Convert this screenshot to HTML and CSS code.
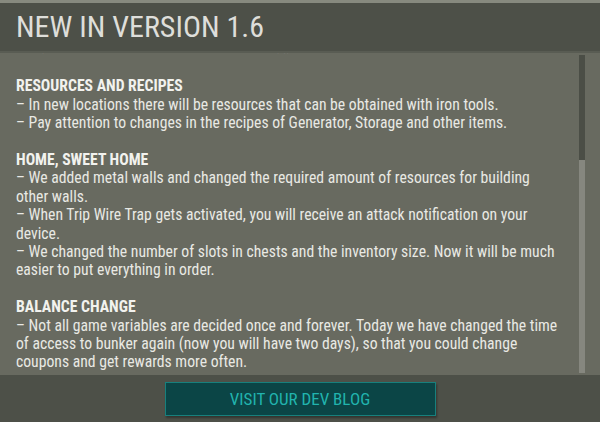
FILE: index.html
```html
<!DOCTYPE html>
<html lang="en">
<head>
<meta charset="utf-8">
<title>New in version 1.6</title>
<link rel="stylesheet" href="styles.css">
</head>
<body>
<div class="window">
  <div class="topstrip"></div>
  <header class="header">
    <h1 class="title">NEW IN VERSION 1.6</h1>
  </header>
  <main class="content">
    <div class="text">
      <div class="inner">
        <div class="section section-prev">
          <p>– Hi, the team worked hard on this release, ,, as usual.</p>
        </div>
        <div class="section">
          <div class="heading">RESOURCES AND RECIPES</div>
          <p>– In new locations there will be resources that can be obtained with iron tools.</p>
          <p>– Pay attention to changes in the recipes of Generator, Storage and other items.</p>
        </div>
        <div class="section">
          <div class="heading">HOME, SWEET HOME</div>
          <p>– We added metal walls and changed the required amount of resources for building other walls.</p>
          <p>– When Trip Wire Trap gets activated, you will receive an attack notification on your device.</p>
          <p>– We changed the number of slots in chests and the inventory size. Now it will be much easier to put everything in order.</p>
        </div>
        <div class="section">
          <div class="heading">BALANCE CHANGE</div>
          <p>– Not all game variables are decided once and forever. Today we have changed the time of access to bunker again (now you will have two days), so that you could change coupons and get rewards more often.</p>
        </div>
      </div>
    </div>
    <div class="scrollbar">
      <div class="thumb"></div>
      <div class="track"></div>
    </div>
  </main>
  <footer class="footer">
    <button class="blog-btn" type="button">VISIT OUR DEV BLOG</button>
  </footer>
</div>
</body>
</html>
```
FILE: styles.css
```css
html, body {
  margin: 0;
  padding: 0;
}
body {
  background: #686a60;
  font-family: "Roboto Condensed", "Roboto", "Liberation Sans", sans-serif;
  color: #e9e9e4;
}
.window {
  width: 600px;
  height: 422px;
  display: grid;
  grid-template-rows: 3px 50px 322px 47px;
  overflow: hidden;
}
.topstrip {
  background: #878a7f;
}
.header {
  box-sizing: border-box;
  background: #4d5048;
  border-bottom: 2px solid #595c53;
  overflow: hidden;
}
.title {
  margin: 0;
  padding-left: 16px;
  font-size: 30px;
  font-weight: 400;
  line-height: 48px;
  color: #dededa;
}
.content {
  display: flex;
  background: #686a60;
  overflow: hidden;
  min-height: 0;
}
.text {
  flex: 1;
  min-width: 0;
  padding: 0 16px;
  overflow: hidden;
}
.inner {
  margin-top: -16px;
  font-size: 15.7px;
  line-height: 18.4px;
}
.inner p {
  margin: 0;
}
.section {
  margin: 0 0 18.4px 0;
}
.section-prev {
  margin-bottom: 22px;
}
.heading {
  font-weight: 700;
  color: #f2f2ee;
}
.scrollbar {
  width: 6px;
  margin: 2px 15px 2px 0;
  display: flex;
  flex-direction: column;
}
.thumb {
  height: 105px;
  background: #4b4e46;
}
.track {
  flex: 1;
  background: #86877f;
}
.footer {
  background: #4d5048;
  display: flex;
  justify-content: center;
  align-items: flex-start;
  padding-top: 7px;
  box-sizing: border-box;
}
.blog-btn {
  box-sizing: border-box;
  width: 271px;
  height: 34px;
  margin: 0;
  padding: 0;
  background: #0b4546;
  border: 1px solid #17807d;
  box-shadow: 1px 2px 2px rgba(0, 0, 0, 0.35);
  color: #21b4ae;
  font-family: "Roboto Condensed", "Roboto", "Liberation Sans", sans-serif;
  font-size: 17px;
  font-weight: 400;
  line-height: 32px;
}
```
